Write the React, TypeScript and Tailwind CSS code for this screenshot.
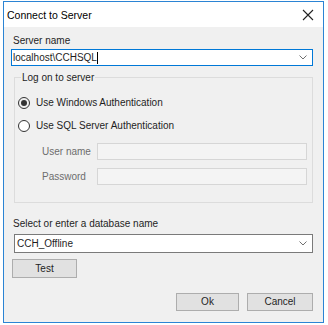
export default function App() {
  return (
    <div className="w-[328px] h-[325px] bg-white pt-[1px] pl-[3px] font-['Liberation_Sans',Arial,sans-serif] text-[10px] leading-[12px] text-[#1e1e1e]">
      <div className="w-[321px] h-[322px] border border-[#2b84d4] flex flex-col">
        {/* Title bar */}
        <div className="h-[25px] bg-white flex items-center justify-between pl-[3px] pr-[7px]">
          <span className="text-[10.5px] text-black">Connect to Server</span>
          <svg width="12" height="12" viewBox="0 0 12 12" className="mr-[2px]">
            <path d="M1 1 L11 11 M11 1 L1 11" stroke="#222" strokeWidth="1.1" fill="none" />
          </svg>
        </div>

        {/* Body */}
        <div className="flex-1 bg-[#f0f0f0] pt-[7px] pl-[7px] pr-[10px] flex flex-col">
          <div className="ml-[2px] h-[13px] leading-[13px]">Server name</div>
          <div className="mt-[2px] h-[17px] w-[302px] bg-white border border-[#0078d7] flex items-center justify-between pl-[1px] pr-[5px]">
            <div className="flex items-center">
              <span>localhost\CCHSQL</span>
              <span className="w-[1px] h-[12px] bg-black" />
            </div>
            <Chevron />
          </div>

          <fieldset className="mt-[5px] ml-[3px] w-[299px] border border-[#dcdcdc] pb-[17px]">
            <legend className="ml-[6px] px-[1px] leading-[13px]">Log on to server</legend>
            <div className="flex flex-col pl-[3px]">
              <div className="mt-[12px] flex items-center h-[13px]">
                <span className="w-[12px] h-[12px] rounded-full border border-[#333] flex items-center justify-center">
                  <span className="w-[6px] h-[6px] rounded-full bg-[#333]" />
                </span>
                <span className="ml-[6px]">Use Windows Authentication</span>
              </div>
              <div className="mt-[10px] flex items-center h-[13px]">
                <span className="w-[12px] h-[12px] rounded-full border border-[#333] bg-white" />
                <span className="ml-[6px]">Use SQL Server Authentication</span>
              </div>
              <div className="mt-[11px] flex items-center">
                <span className="ml-[24px] w-[55px] text-[#6d6d6d]">User name</span>
                <span className="w-[210px] h-[17px] bg-[#f4f4f4] border border-[#d6d6d6]" />
              </div>
              <div className="mt-[8px] flex items-center">
                <span className="ml-[24px] w-[55px] text-[#6d6d6d]">Password</span>
                <span className="w-[210px] h-[17px] bg-[#f4f4f4] border border-[#d6d6d6]" />
              </div>
            </div>
          </fieldset>

          <div className="mt-[14px] ml-[2px] h-[13px] leading-[13px]">Select or enter a database name</div>
          <div className="mt-[4px] ml-[3px] h-[19px] w-[299px] bg-white border border-[#7a7a7a] flex items-center justify-between pl-[2px] pr-[5px]">
            <span>CCH_Offline</span>
            <Chevron />
          </div>
          <button className="mt-[6px] ml-[1px] w-[65px] h-[19px] bg-[#e1e1e1] border border-[#adadad] flex items-center justify-center">
            Test
          </button>

          <div className="mt-[15px] flex justify-end gap-[8px]">
            <button className="w-[63px] h-[18px] bg-[#e1e1e1] border border-[#adadad] flex items-center justify-center">Ok</button>
            <button className="w-[66px] h-[18px] bg-[#e1e1e1] border border-[#adadad] flex items-center justify-center">Cancel</button>
          </div>
        </div>
      </div>
    </div>
  )
}

function Chevron() {
  return (
    <svg width="8" height="5" viewBox="0 0 8 5">
      <path d="M0.5 0.5 L4 4 L7.5 0.5" stroke="#707070" strokeWidth="1" fill="none" />
    </svg>
  )
}
